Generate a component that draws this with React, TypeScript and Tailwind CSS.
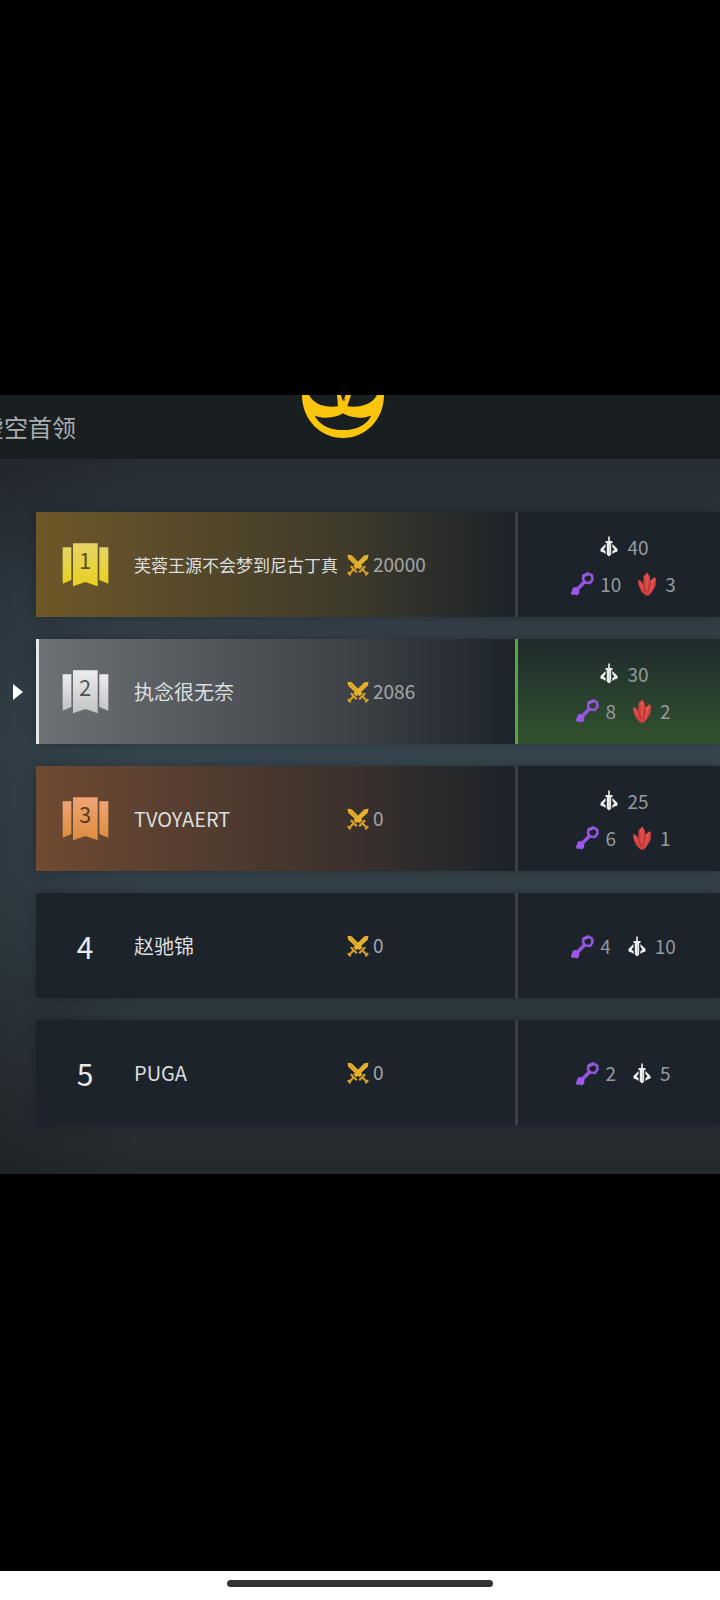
import clsx from "clsx";

type RewardKind = "sword" | "key" | "crystal";

type Reward = {
  kind: RewardKind;
  count: number;
};

type Player = {
  rank: number;
  name: string;
  score: number;
  rewards: Reward[][];
  current?: boolean;
};

const players: Player[] = [
  {
    rank: 1,
    name: "芙蓉王源不会梦到尼古丁真",
    score: 20000,
    rewards: [
      [{ kind: "sword", count: 40 }],
      [
        { kind: "key", count: 10 },
        { kind: "crystal", count: 3 },
      ],
    ],
  },
  {
    rank: 2,
    name: "执念很无奈",
    score: 2086,
    current: true,
    rewards: [
      [{ kind: "sword", count: 30 }],
      [
        { kind: "key", count: 8 },
        { kind: "crystal", count: 2 },
      ],
    ],
  },
  {
    rank: 3,
    name: "TVOYAERT",
    score: 0,
    rewards: [
      [{ kind: "sword", count: 25 }],
      [
        { kind: "key", count: 6 },
        { kind: "crystal", count: 1 },
      ],
    ],
  },
  {
    rank: 4,
    name: "赵驰锦",
    score: 0,
    rewards: [
      [
        { kind: "key", count: 4 },
        { kind: "sword", count: 10 },
      ],
    ],
  },
  {
    rank: 5,
    name: "PUGA",
    score: 0,
    rewards: [
      [
        { kind: "key", count: 2 },
        { kind: "sword", count: 5 },
      ],
    ],
  },
];

const medalColors: Record<number, [string, string]> = {
  1: ["#e6d466", "#e8d020"],
  2: ["#ececee", "#c3c4c6"],
  3: ["#f0a474", "#dc8c3e"],
};

const rowColors: Record<number, string> = {
  1: "bg-linear-to-r from-[#6e5828] via-[#3f3a2a] via-65% to-[#1c232a]",
  2: "bg-linear-to-r from-[#6e7277] via-[#3f4348] via-65% to-[#1c232a]",
  3: "bg-linear-to-r from-[#704a32] via-[#3c312d] via-65% to-[#1c232a]",
};

const Logo = () => (
  <svg viewBox="0 0 246 129" className="h-[43px] w-[82px]" aria-hidden="true">
    <path
      fill="#f9c50d"
      fillRule="evenodd"
      d="M0 0H21C34 25 62 39 108 34L105 0H117L122 19L131 0H147L136 34C176 39 210 28 225 0H246C246 75 190 129 123 129C56 129 0 75 0 0ZM38 62C54 92 86 105 123 105C160 105 192 92 208 62C182 71 148 71 123 55C98 71 64 71 38 62Z"
    />
    <path fill="#c22a1c" d="M125 12l6-4-5 14z" />
  </svg>
);

const Swords = () => (
  <svg viewBox="0 0 22 22" className="size-[22px] shrink-0" aria-hidden="true">
    <g fill="#e6b02c">
      <path d="M0.500 0.800L4.600 1.200L15.600 12.200L12.600 15.200L1.200 4.800Z" />
      <path d="M21.500 0.800L17.400 1.200L6.400 12.200L9.400 15.200L20.800 4.800Z" />
    </g>
    <g fill="none" stroke="#d8a02a" strokeWidth="2.1">
      <path d="M12.200 18.200L18.200 12.200M15.500 15.500L20 20M18.300 21.200L21.200 18.300" />
      <path d="M9.800 18.200L3.800 12.200M6.500 15.500L2 20M3.700 21.200L0.800 18.300" />
    </g>
    <path d="M3 3L10 9.600" stroke="#b98022" strokeWidth="0.6" />
  </svg>
);

const SwordIcon = () => (
  <svg viewBox="0 0 24 24" className="size-6" aria-hidden="true">
    <g fill="#eef0ef">
      <path d="M11.200 2L12 1L12.800 2V6H15.500V8H14.200V19.500L12 21.500L9.800 19.500V8H8.500V6H11.200Z" />
      <path d="M8.600 9L8.600 11.800L6.600 14.500L8.600 16.200V19L6.500 17.500L3.500 16.500V14Z" />
      <path d="M15.400 9L15.400 11.800L17.400 14.500L15.400 16.200V19L17.500 17.500L20.500 16.500V14Z" />
    </g>
    <path d="M12.800 9V19" stroke="#b9bdbd" strokeWidth="0.8" />
  </svg>
);

const KeyIcon = () => (
  <svg viewBox="0 0 24 24" className="size-6" aria-hidden="true">
    <g fill="none" stroke="#9455dd" strokeLinejoin="round">
      <path
        d="M13.500 3.500L18 1.500L22 3.500L22.500 7.500L20 11L15.500 10.500L13 7.500Z"
        strokeWidth="2.6"
      />
      <path d="M15 9.500L5 19.500" strokeWidth="3.8" />
    </g>
    <path
      fill="#9d58ea"
      d="M3 15.500L6 15L9.500 18.500L9 22L6.500 23.500L4.500 22.500L2 23L0.800 20.500L1.800 19Z"
    />
    <path d="M14.500 4.500L18 3" stroke="#b98af0" strokeWidth="0.8" />
  </svg>
);

const CrystalIcon = () => (
  <svg viewBox="0 0 24 24" className="size-6" aria-hidden="true">
    <path
      fill="#d34140"
      d="M3 8L6 9L8.500 12L8.500 4.500L12 0.500L15 4.500V9L19.500 5L21 7L20.500 14L17 20L14 23.500H10.500L6 19L3.500 13Z"
    />
    <path
      d="M10 6L12 3V17M15.500 10.500L19 7L15 19M4.500 10L8 16"
      fill="none"
      stroke="#e25a52"
      strokeWidth="1.3"
    />
    <path
      d="M8.500 12L11 21M15.200 10L13.200 20"
      fill="none"
      stroke="#ab3034"
      strokeWidth="0.8"
    />
  </svg>
);

const rewardIcons = {
  sword: SwordIcon,
  key: KeyIcon,
  crystal: CrystalIcon,
};

const Medal = ({ rank }: { rank: number }) => {
  const [top, bottom] = medalColors[rank];

  return (
    <div className="grid justify-items-center">
      <svg
        viewBox="0 0 141 132"
        className="col-start-1 row-start-1 h-11 w-[47px]"
        aria-hidden="true"
      >
        <defs>
          <linearGradient id={`medal-${rank}`} x1="0" y1="0" x2="0" y2="1">
            <stop offset="0" stopColor={top} />
            <stop offset="1" stopColor={bottom} />
          </linearGradient>
        </defs>
        <g fill={`url(#medal-${rank})`}>
          <path d="M2 13H28V111L2 122Z" />
          <path d="M112 13H139V122L112 111Z" />
          <path d="M33 1H107V130L70 117L33 130Z" />
        </g>
      </svg>
      <span className="col-start-1 row-start-1 text-[22px] leading-8 text-black/65">
        {rank}
      </span>
    </div>
  );
};

const RewardItem = ({ kind, count }: Reward) => {
  const Icon = rewardIcons[kind];

  return (
    <span className="flex items-center gap-1.5">
      <Icon />
      {count}
    </span>
  );
};

const PlayerRow = ({ player }: { player: Player }) => {
  const { rank, name, score, rewards, current } = player;

  return (
    <li className="flex h-[105px]">
      {/* Marker for the signed in player */}
      <div className="flex w-9 shrink-0 items-center pl-[13px]">
        {current && (
          <svg viewBox="0 0 10 16" className="h-4 w-[10px]" aria-hidden="true">
            <path d="M0 0L10 8L0 16Z" fill="#fff" />
          </svg>
        )}
      </div>

      <div className="flex min-w-0 flex-1 shadow-[0_0_12px_rgba(16,20,24,0.4)]">
        <div
          className={clsx(
            "flex min-w-0 flex-1 items-center",
            rowColors[rank] ?? "bg-[#1c232a]",
            current && "shadow-[inset_3px_0_0_#e4e8e8]"
          )}
        >
          <div className="flex w-[98px] shrink-0 justify-center text-3xl text-[#e8eaec]">
            {rank <= 3 ? <Medal rank={rank} /> : rank}
          </div>
          <div
            className={clsx(
              "w-[213px] shrink-0 whitespace-nowrap text-[#dcdedf]",
              name.length > 10 ? "text-[17px]" : "text-xl"
            )}
          >
            {name}
          </div>
          <div className="flex items-center gap-1 text-[19px] text-[#a3a6a7]">
            <Swords />
            {score}
          </div>
        </div>

        <div
          className={clsx(
            "flex w-[205px] shrink-0 flex-col justify-center gap-[5px] border-l-[3px] pt-0.5 pl-2 text-[19px] text-[#949a9d]",
            current
              ? "border-[#55a83c] bg-linear-to-b from-[#1f2a2b] to-[#31532d]"
              : "border-[#3b4046] bg-[#1c232a]"
          )}
        >
          {rewards.map((line, index) => (
            <div key={index} className="flex h-8 items-center justify-center gap-3.5">
              {line.map((reward) => (
                <RewardItem key={reward.kind} {...reward} />
              ))}
            </div>
          ))}
        </div>
      </div>
    </li>
  );
};

const App = () => {
  return (
    <div className="flex min-h-screen flex-col bg-black font-['Noto_Sans_CJK_SC',sans-serif]">
      <main className="flex flex-1 flex-col justify-center pb-[2px]">
        <div className="overflow-hidden bg-[linear-gradient(180deg,#262d33_8%,#333e47_25%,#384750_45%,#35424a_65%,#2b3339_88%,#24292d_100%)]">
          <header className="grid h-16 grid-cols-[1fr_auto_1fr] bg-[#191e21] pr-[34px]">
            <h1 className="-ml-5 self-center text-2xl text-[#a9adae]">
              虚空首领
            </h1>
            <Logo />
          </header>

          <ol className="flex flex-col gap-[22px] bg-linear-to-r from-black/15 to-transparent to-20% pt-[53px] pb-[49px]">
            {players.map((player) => (
              <PlayerRow key={player.rank} player={player} />
            ))}
          </ol>
        </div>
      </main>

      {/* Gesture bar */}
      <footer className="flex h-[29px] justify-center bg-white pt-[9px]">
        <div className="h-[7px] w-[266px] rounded-full bg-[#333]" />
      </footer>
    </div>
  );
};

export default App;
